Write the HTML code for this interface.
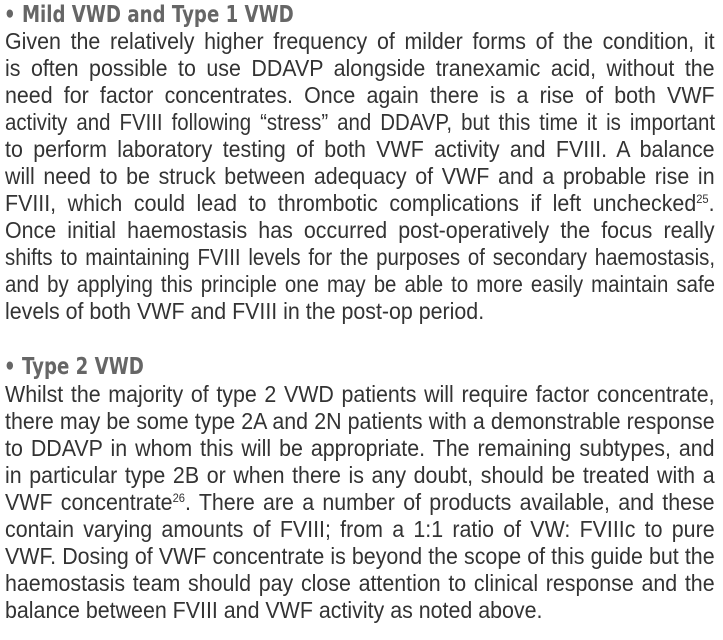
<!DOCTYPE html>
<html><head><meta charset="utf-8"><style>
html,body{margin:0;padding:0;background:#fff;width:723px;height:640px;overflow:hidden}
.l{position:absolute;left:5px;width:763px;transform:scaleX(0.93);transform-origin:0 0;font-family:"Liberation Sans",sans-serif;font-size:23px;line-height:27px;height:27px;color:#333;text-align:justify;text-align-last:justify;white-space:nowrap;}
.l.n{text-align-last:left}
.l.t{width:800px;transform:scaleX(0.8875)}
.h{position:absolute;left:4px;font-family:"DejaVu Sans","Liberation Sans",sans-serif;font-weight:bold;font-size:23px;line-height:27px;color:#666;transform:scaleX(0.79);transform-origin:0 0;white-space:nowrap}
sup{font-size:12px;line-height:0;vertical-align:8px}
.w{white-space:normal}
</style></head><body>
<div class="h" style="top:2px">• Mild VWD and Type 1 VWD</div>
<div class="l w" style="top:28px">Given the relatively higher frequency of milder forms of the condition, it</div>
<div class="l w" style="top:55px">is often possible to use DDAVP alongside tranexamic acid, without the</div>
<div class="l w" style="top:82px">need for factor concentrates. Once again there is a rise of both VWF</div>
<div class="l w t" style="top:109px">activity and FVIII following “stress” and DDAVP, but this time it is important</div>
<div class="l w" style="top:136px">to perform laboratory testing of both VWF activity and FVIII. A balance</div>
<div class="l w" style="top:163px">will need to be struck between adequacy of VWF and a probable rise in</div>
<div class="l w" style="top:190px">FVIII, which could lead to thrombotic complications if left unchecked<sup>25</sup>.</div>
<div class="l w" style="top:217px">Once initial haemostasis has occurred post-operatively the focus really</div>
<div class="l w t" style="top:244px">shifts to maintaining FVIII levels for the purposes of secondary haemostasis,</div>
<div class="l w t" style="top:271px">and by applying this principle one may be able to more easily maintain safe</div>
<div class="l n" style="top:298px">levels of both VWF and FVIII in the post-op period.</div>

<div class="h" style="top:354px">• Type 2 VWD</div>
<div class="l w" style="top:381px">Whilst the majority of type 2 VWD patients will require factor concentrate,</div>
<div class="l w" style="top:408px">there may be some type 2A and 2N patients with a demonstrable response</div>
<div class="l w" style="top:435px">to DDAVP in whom this will be appropriate. The remaining subtypes, and</div>
<div class="l w" style="top:462px">in particular type 2B or when there is any doubt, should be treated with a</div>
<div class="l w" style="top:489px">VWF concentrate<sup>26</sup>. There are a number of products available, and these</div>
<div class="l w" style="top:516px">contain varying amounts of FVIII; from a 1:1 ratio of VW: FVIIIc to pure</div>
<div class="l w" style="top:543px">VWF. Dosing of VWF concentrate is beyond the scope of this guide but the</div>
<div class="l w" style="top:570px">haemostasis team should pay close attention to clinical response and the</div>
<div class="l n" style="top:597px">balance between FVIII and VWF activity as noted above.</div>
</body></html>
